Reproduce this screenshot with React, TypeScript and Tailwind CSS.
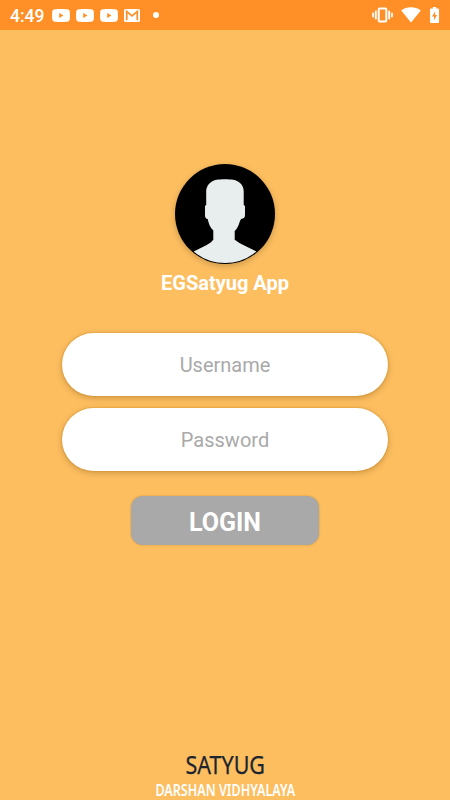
import { useState } from 'react'

const YOUTUBE_COUNT = 3

function YoutubeIcon() {
  return (
    <svg width="18" height="13" viewBox="0 0 18 13" fill="none">
      <path
        fillRule="evenodd"
        d="M3 0.3C6 0 12 0 15 0.3C17 0.5 17.6 1.3 17.8 3C18 5.5 18 7.5 17.8 10C17.6 11.7 17 12.4 15 12.7C12 13 6 13 3 12.7C1 12.4 0.4 11.7 0.2 10C0 7.5 0 5.5 0.2 3C0.4 1.3 1 0.5 3 0.3ZM7.2 4V9L11.5 6.5Z"
        fill="white"
      />
    </svg>
  )
}

function MailIcon() {
  return (
    <svg width="16" height="13" viewBox="0 0 16 13" fill="none">
      <rect width="16" height="13" rx="1.5" fill="white" />
      <path d="M2.7 11.3V2.6L8 6.8L13.3 2.6V11.3" stroke="#ff8f26" strokeWidth="1.7" />
    </svg>
  )
}

function VibrateIcon() {
  return (
    <svg width="21" height="16" viewBox="0 0 21 16" fill="none" stroke="white">
      <rect x="6.7" y="1.5" width="7.6" height="13" rx="1" strokeWidth="2" />
      <path d="M3.8 3.8V12.2M17.2 3.8V12.2" strokeWidth="1.9" />
      <path d="M1 5.8V10.2M20 5.8V10.2" strokeWidth="1.7" />
    </svg>
  )
}

function WifiIcon() {
  return (
    <svg width="20" height="16" viewBox="0 0 20 16" fill="white">
      <path d="M10 15.5L0.2 3.6C3 1.4 6.3 0.3 10 0.3C13.7 0.3 17 1.4 19.8 3.6Z" />
    </svg>
  )
}

function BatteryIcon() {
  return (
    <svg width="9" height="16" viewBox="0 0 9 16" fill="white">
      <path
        fillRule="evenodd"
        d="M2.8 0H6.2V1.6H8.2Q9 1.6 9 2.4V15.2Q9 16 8.2 16H0.8Q0 16 0 15.2V2.4Q0 1.6 0.8 1.6H2.8ZM5.2 4.6L2 9.5H4V13.2L7.1 8.1H5.2Z"
      />
    </svg>
  )
}

function StatusBar() {
  return (
    <div className="flex h-[30px] shrink-0 items-center bg-[#ff8f26] pr-[11px] pl-[10px]">
      <span className="w-[42px] pt-px text-[17.5px] leading-[30px] font-medium">4:49</span>
      <div className="flex items-center gap-[6px]">
        {Array.from({ length: YOUTUBE_COUNT }, (_, i) => (
          <YoutubeIcon key={i} />
        ))}
        <MailIcon />
      </div>
      <span className="ml-[13px] size-[6px] rounded-full bg-white" />
      <div className="ml-auto flex items-center">
        <VibrateIcon />
        <span className="mr-[9px] ml-[8px]">
          <WifiIcon />
        </span>
        <BatteryIcon />
      </div>
    </div>
  )
}

function Avatar() {
  return (
    <div className="size-[100px] overflow-hidden rounded-full bg-black shadow-[0_2px_6px_rgba(0,0,0,0.2)]">
      <svg width="100" height="100" viewBox="0 0 100 100">
        <path
          d="M50 15.3C43 15.3 39.5 16 37 17.5C33 20 31.5 23 31.2 27V41L30 42V51C30 53.5 30.8 54.8 32.7 55C33.5 59 35 63.5 38.3 66.5V75.7C36.5 78 34.5 79.5 31.7 80.9L18.7 87.5Q32 99 50 99Q68 99 81.3 87.5L68.3 80.9C65 79.3 62 77.5 59.7 75.7V67C61.5 65.5 63.8 61.5 64.6 58L66 55C69 54.8 70 53 70 51V42L68.7 41V27C68.5 23 67 20 63 17.5C60.5 16 57 15.3 50 15.3Z"
          fill="#e8eeed"
        />
      </svg>
    </div>
  )
}

interface FieldProps {
  type: string
  label: string
  value: string
  onChange: (value: string) => void
}

function Field({ type, label, value, onChange }: FieldProps) {
  return (
    <input
      type={type}
      placeholder={label}
      value={value}
      onChange={(e) => onChange(e.target.value)}
      className="h-[62.5px] w-[326px] rounded-full bg-white pt-px text-center text-[20px] text-zinc-800 shadow-[0_2px_6px_rgba(90,50,0,0.28),0_0_1px_1px_rgba(225,145,20,0.25)] outline-none placeholder:text-[#a9a9a9]"
    />
  )
}

export default function App() {
  const [username, setUsername] = useState('')
  const [password, setPassword] = useState('')

  return (
    <div className="flex h-[800px] w-[450px] flex-col overflow-hidden bg-[#fcbe5f] font-['Roboto',sans-serif] text-white">
      <StatusBar />
      <div className="flex flex-col items-center pt-[133.5px]">
        <Avatar />
        <h1 className="mt-[6px] text-[20px] leading-[26px] font-bold">EGSatyug App</h1>
        <form
          onSubmit={(e) => e.preventDefault()}
          className="mt-[37.5px] flex flex-col items-center"
        >
          <div className="flex flex-col gap-[12.5px]">
            <Field type="text" label="Username" value={username} onChange={setUsername} />
            <Field type="password" label="Password" value={password} onChange={setPassword} />
          </div>
          <button
            type="submit"
            className="mt-[25.5px] h-[49px] w-[188px] rounded-[12px] bg-[#a9a9a9] pt-[5px] text-[25px] font-bold shadow-[0_0_2px_rgba(120,80,20,0.4)]"
          >
            LOGIN
          </button>
        </form>
      </div>
      <footer className="mt-auto flex flex-col items-center font-['Noto_Sans',sans-serif]">
        <p className="scale-x-[0.86] text-[25px] leading-[34px] whitespace-nowrap text-[#1b2430] [-webkit-text-stroke:0.25px_#1b2430]">
          SATYUG
        </p>
        <p className="scale-x-[0.81] pt-px pb-px text-[15.5px] leading-[17px] font-semibold whitespace-nowrap">
          DARSHAN VIDHYALAYA
        </p>
      </footer>
    </div>
  )
}
